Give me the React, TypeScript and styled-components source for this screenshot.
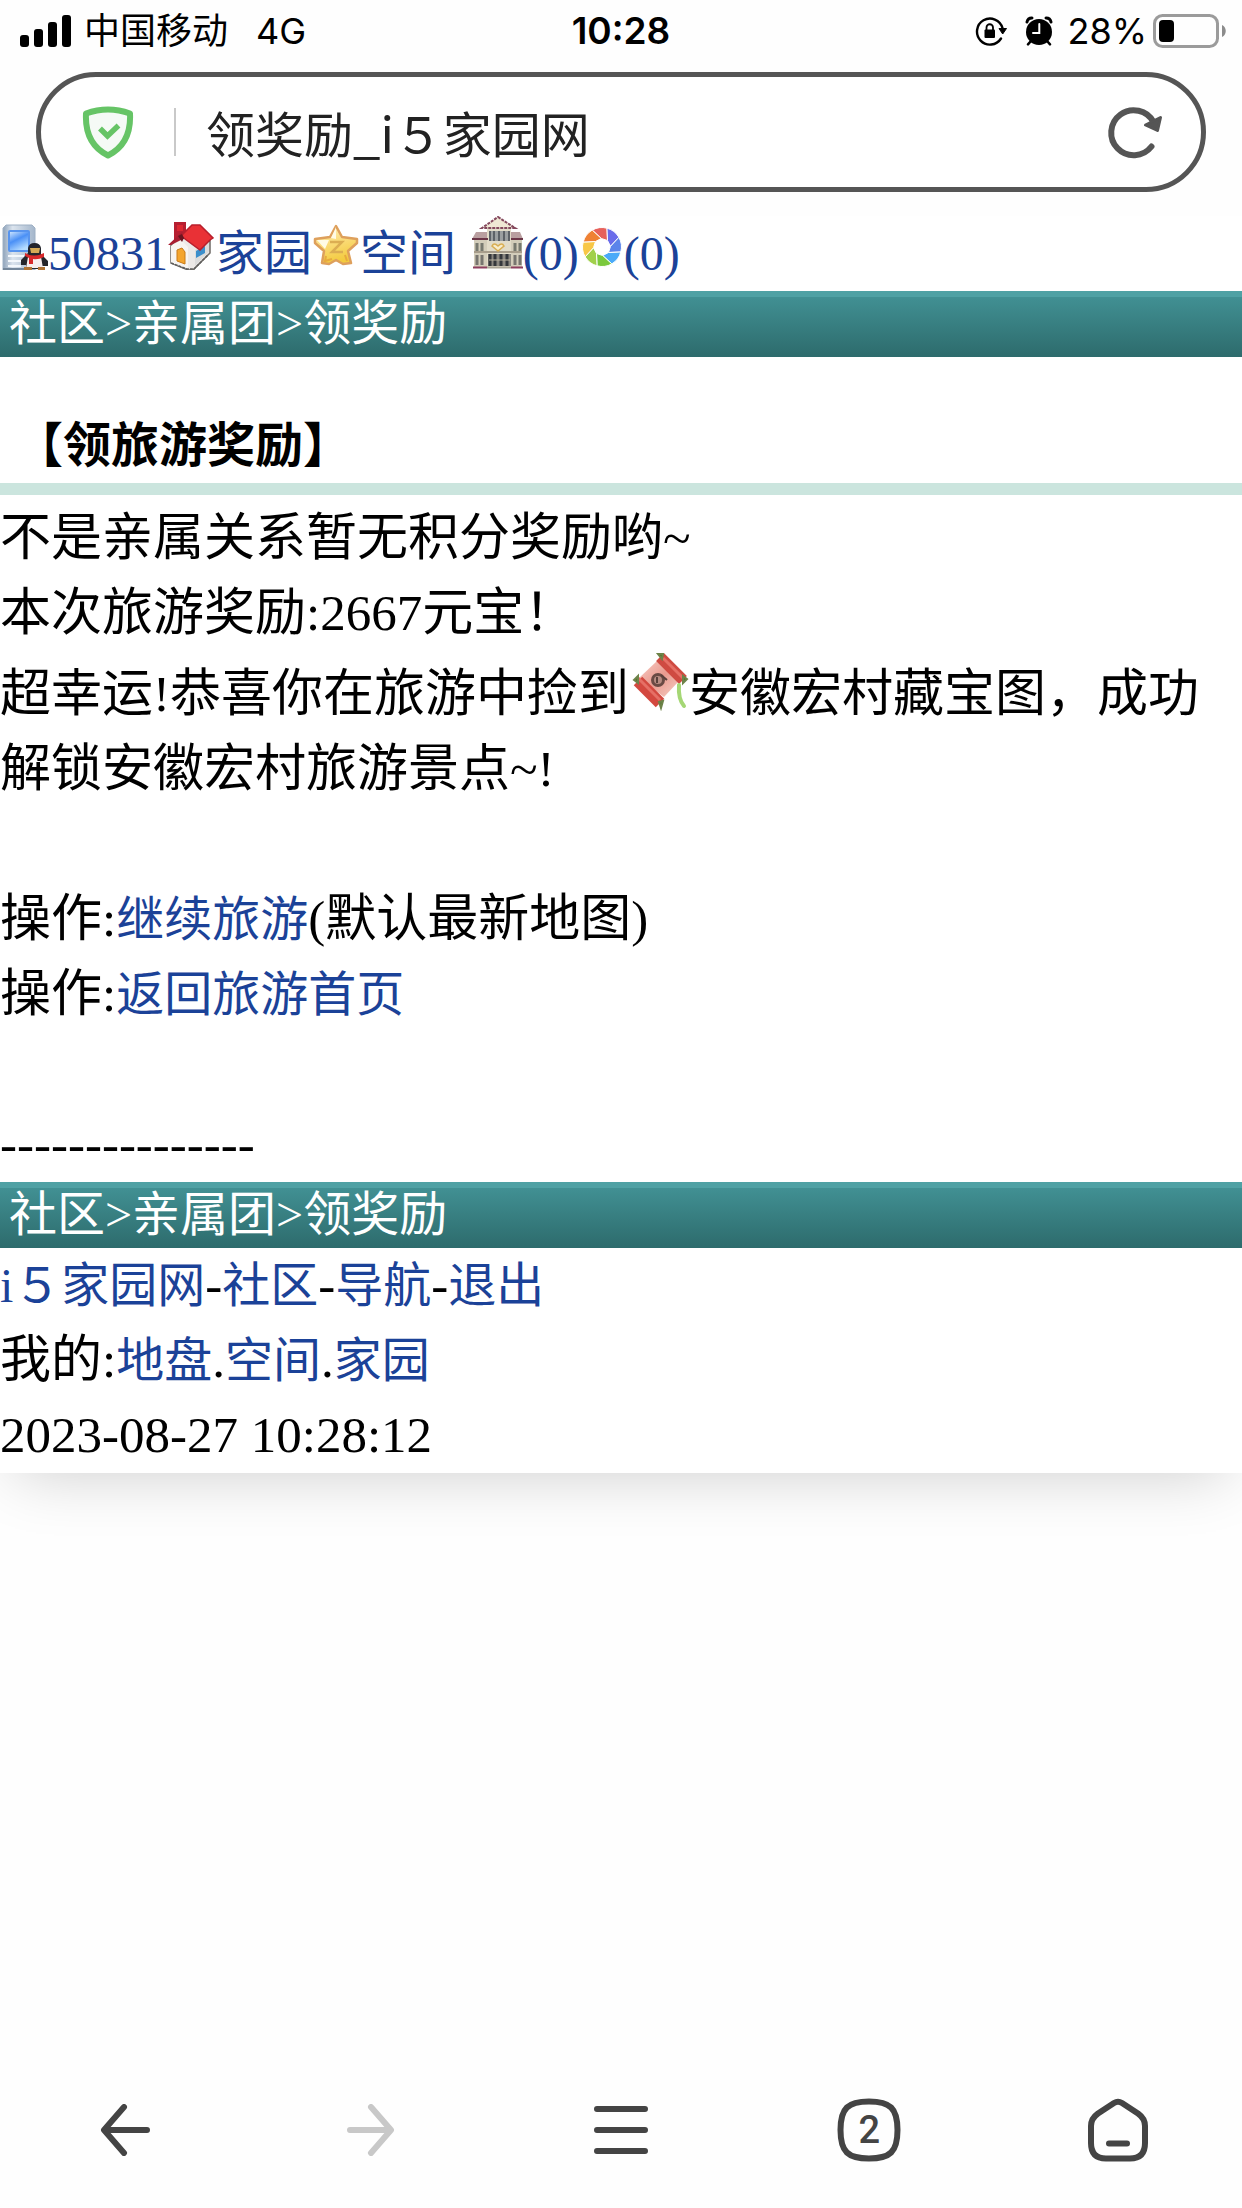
import React from "react";
import styled, { createGlobalStyle } from "styled-components";

const LINK = "#1b4298";
const SANS = `Inter, "Noto Sans CJK SC", sans-serif`;
const SERIF = `"Liberation Serif", "Noto Sans CJK SC", serif`;

const GlobalStyle = createGlobalStyle`
  *, *::before, *::after { box-sizing: border-box; }
  body { margin: 0; background: #fefefe; color: #000; }
  p, h1 { margin: 0; }
  svg { flex: none; }
`;

const Shell = styled.div`
  display: flex;
  flex-direction: column;
  min-height: 100vh;
`;

/* ---------- browser chrome ---------- */

const Chrome = styled.header`
  position: relative;
  z-index: 1;
  padding-bottom: 24px;
  background: #fefefe;
  font-family: ${SANS};
`;

const StatusBar = styled.div`
  display: grid;
  grid-template-columns: 1fr auto 1fr;
  align-items: center;
  height: 60px;
  padding: 0 15px;
  font-size: 36px;
  line-height: 62px;
`;

const StatusSide = styled.div<{ $end?: boolean }>`
  display: flex;
  align-items: center;
  justify-content: ${(p) => (p.$end ? "flex-end" : "flex-start")};
  padding-left: 5px;
`;

const Carrier = styled.span`
  margin: 0 28px 0 13px;
`;

const Clock = styled.time`
  font-size: 37px;
  font-weight: 600;
`;

const Percent = styled.span`
  margin: 0 6px 0 14px;
`;

const AlarmSlot = styled.span`
  display: flex;
  margin-left: 17px;
`;

const AddressBar = styled.form`
  display: flex;
  align-items: center;
  height: 120px;
  margin: 12px 36px 0;
  padding: 0 38px 0 39px;
  border: 5px solid #555;
  border-radius: 60px;
  background: #fff;
`;

const Divider = styled.span`
  width: 2px;
  height: 48px;
  margin: 0 30px 0 38px;
  background: #c9c9c9;
`;

const AddressInput = styled.input`
  flex: 1;
  min-width: 0;
  height: 84px;
  padding: 0 0 2px;
  border: 0;
  background: none;
  color: #222;
  font: 49px/82px "Noto Sans CJK SC", sans-serif;
  outline: none;
`;

const IconButton = styled.button`
  display: grid;
  place-items: center;
  padding: 0;
  border: 0;
  background: none;
  color: #444;
  cursor: pointer;

  &:disabled { color: #c8c8c8; }
`;

const BottomNav = styled.nav`
  display: grid;
  grid-template-columns: repeat(5, 1fr);
  height: 156px;
`;

const TabFrame = styled.span`
  display: grid;
  place-items: center;

  & > * { grid-area: 1 / 1; }
`;

const TabCount = styled.span`
  font: 500 38px/48px Roboto, sans-serif;
`;

/* ---------- web page ---------- */

const Page = styled.main`
  background: #fff;
  box-shadow: 0 15px 60px -15px rgba(0, 0, 0, 0.2);
  font-family: ${SERIF};
  font-size: 51px;
  line-height: 75px;
`;

const Spacer = styled.div`
  flex: 1;
`;

const Link = styled.a`
  color: ${LINK};
  font-size: 48px;
  line-height: 1;
  text-decoration: none;
`;

const Crumbs = styled.nav`
  padding: 0 9px;
  background: linear-gradient(#4fa1a4 0 6px, #419093 6px, #2d6b6c);
  color: #fff;
  font-size: 48px;
  line-height: 66px;

  a { color: inherit; text-decoration: none; }
`;

const Title = styled.h1`
  padding: 51px 15px 0;
  border-bottom: 12px solid #cbe5de;
  font-size: 48px;
  font-weight: 700;
  line-height: 75px;
`;

const Content = styled.section`
  padding-top: 6px;
`;

const Sprite = styled.svg`
  vertical-align: baseline;
`;

/* ---------- status icons ---------- */

const Signal = () => (
  <svg width="51" height="32" viewBox="0 0 51 32" aria-hidden="true">
    <rect x="0" y="20" width="9" height="12" rx="3" />
    <rect x="14" y="14" width="9" height="18" rx="3" />
    <rect x="28" y="7" width="9" height="25" rx="3" />
    <rect x="42" y="0" width="9" height="32" rx="3" />
  </svg>
);

const RotationLock = () => (
  <svg width="33" height="30" viewBox="0 0 33 30" aria-hidden="true">
    <path d="M26 22.500A13 13 0 1 1 27.500 12" fill="none" stroke="#000" strokeWidth="2.4" strokeLinecap="round" />
    <path d="M24 12.500h7.500L27.700 18z" stroke="#000" strokeLinejoin="round" />
    <rect x="9.500" y="13.500" width="10.500" height="8.500" rx="1" />
    <path d="M11.500 14V11.500A3.250 3.250 0 0 1 18 11.500V14" fill="none" stroke="#000" strokeWidth="1.800" />
  </svg>
);

const Alarm = () => (
  <svg width="28" height="30" viewBox="0 0 28 30" aria-hidden="true">
    <circle cx="14" cy="16" r="13" />
    <path d="M2 6a5 5 0 0 1 5-4M26 6a5 5 0 0 0-5-4" fill="none" stroke="#000" strokeWidth="3" strokeLinecap="round" />
    <path d="M5.500 25.500 3 28.300M22.500 25.500 25 28.300" stroke="#000" strokeWidth="2.500" strokeLinecap="round" />
    <path d="M14.300 8v9H8" fill="none" stroke="#fff" strokeWidth="2" strokeLinecap="round" />
  </svg>
);

const Battery = () => (
  <svg width="74" height="34" viewBox="0 0 74 34" aria-hidden="true">
    <rect x="1.500" y="1.500" width="63" height="31" rx="8" fill="none" stroke="#9b9b9b" strokeWidth="3" />
    <rect x="6" y="6" width="15" height="22" rx="4" />
    <path d="M69 11c5 2 5 10 0 12z" fill="#8c8c8c" />
  </svg>
);

/* ---------- toolbar icons ---------- */

const Shield = () => (
  <svg width="56" height="56" viewBox="0 0 56 56" aria-hidden="true">
    <path d="M6 9.500Q28 1.500 50 9.500C51 29 45 43 28 51.500 11 43 5 29 6 9.500z" fill="#f5faf6" stroke="#66c466" strokeWidth="6" strokeLinejoin="round" />
    <path d="M20 24.500 27.500 32 38.500 21.500" fill="none" stroke="#66c466" strokeWidth="5.500" />
  </svg>
);

const Reload = () => (
  <svg width="56" height="54" viewBox="0 0 56 54" aria-hidden="true">
    <path d="M44.500 41.500A22.500 22.500 0 1 1 46.500 17" fill="none" stroke="#555" strokeWidth="6" strokeLinecap="round" />
    <path d="M38.500 20 53.500 12.500 50.500 25.500z" fill="#555" stroke="#555" strokeWidth="3" strokeLinejoin="round" />
  </svg>
);

const Arrow = ({ forward }: { forward?: boolean }) => (
  <svg width="54" height="52" viewBox="0 0 54 52" aria-hidden="true">
    <path
      d={forward ? "M25 3 45 26 25 49M4 26H44" : "M27 3 7 26 27 49M8 26H50"}
      fill="none" stroke="currentColor" strokeWidth="6" strokeLinecap="round" strokeLinejoin="round"
    />
  </svg>
);

const Menu = () => (
  <svg width="54" height="48" viewBox="0 0 54 48" aria-hidden="true">
    <path d="M3 3H51M3 24H51M3 45H51" stroke="currentColor" strokeWidth="6" strokeLinecap="round" />
  </svg>
);

const Squircle = () => (
  <svg width="64" height="64" viewBox="0 0 64 64" aria-hidden="true">
    <path d="M32 3.500C53 3.500 60.500 10 60.500 32S53 60.500 32 60.500 3.500 54 3.500 32 11 3.500 32 3.500z" fill="none" stroke="currentColor" strokeWidth="6" />
  </svg>
);

const Home = () => (
  <svg width="60" height="64" viewBox="0 0 60 64" aria-hidden="true">
    <path d="M26 5Q30 2.500 34 5L50 15.500Q57 20.500 57 28V45Q57 60.500 42 60.500H18Q3 60.500 3 45V28Q3 20.500 10 15.500z" fill="none" stroke="currentColor" strokeWidth="6" strokeLinejoin="round" />
    <path d="M21 45.500H39" stroke="currentColor" strokeWidth="6" strokeLinecap="round" />
  </svg>
);

/* ---------- page sprites ---------- */

const PhoneSprite = () => (
  <Sprite width="48" height="48" viewBox="0 0 48 48" aria-hidden="true">
    <defs>
      <linearGradient id="body" x2="1">
        <stop stopColor="#8fa3ba" />
        <stop offset=".3" stopColor="#dbe4ee" />
        <stop offset="1" stopColor="#a4b6cb" />
      </linearGradient>
      <linearGradient id="screen" y2="1" x2=".5">
        <stop stopColor="#d9ecff" />
        <stop offset=".5" stopColor="#4a90f6" />
        <stop offset="1" stopColor="#b5dcff" />
      </linearGradient>
    </defs>
    <path d="M6 3H32l3 3V48H3V6z" fill="url(#body)" stroke="#9eb0c4" />
    <rect x="9" y="9" width="20" height="20" rx="1" fill="url(#screen)" stroke="#5794ee" strokeWidth="2" />
    <path d="M8 34H24M8 39H22M8 44H21" stroke="#f4f8fc" strokeWidth="2" />
    <path d="M3 47H26" stroke="#74879b" strokeWidth="2" />
    <path d="M28 31V26Q29 21 34.500 21T41 26V32L48 39V44H42V47H26V43H21V38z" fill="#25262c" />
    <path d="M30 26H40L39 31H31z" fill="#d6a955" />
    <path d="M28 35H41L43 46H26z" fill="#f7eeee" />
    <path d="M25 31Q34 36 44 31V35Q38 38 33 37V42H29V36L25 34z" fill="#d9292b" />
    <path d="M24 45H32V48H24zM38 45H45V48H38z" fill="#b17435" />
  </Sprite>
);

const HouseSprite = () => (
  <Sprite width="48" height="48" viewBox="0 0 48 48" aria-hidden="true">
    <path d="M3 23 14 13 33 27 42 18V31L25 48H20L3 41z" fill="#ece9e7" stroke="#6d6a66" strokeWidth="1.500" />
    <path d="M3 24V41L20 47V25L13 18z" fill="#f7f4f0" />
    <path d="M9 28 14 26 17 30V42L9 39z" fill="#f4a52d" stroke="#c97a17" />
    <path d="M27 28 41 19V30L27 44z" fill="#dcdcdc" />
    <path d="M28 29 37 24V31L28 36z" fill="#3c8fcb" />
    <path d="M6 0H18V9L12 16 6 19z" fill="#b61f31" />
    <path d="M9 3H15V9H9z" fill="#dc2831" />
    <path d="M0 23 14 10 20 16 15 17 3 23z" fill="#a91d30" />
    <path d="M24 3H32L45 16 42 18 32 28 13 14z" fill="#e93136" stroke="#b91f2c" strokeWidth="1.500" />
    <path d="M10 14 14 12 16 16 14 20z" fill="#6a1520" />
    <path d="M3 41 19 47H26L40 33" fill="none" stroke="#5e5d5c" strokeWidth="1.500" strokeDasharray="3 1" />
  </Sprite>
);

const StarSprite = () => (
  <Sprite width="48" height="48" viewBox="0 0 48 48" aria-hidden="true">
    <defs>
      <linearGradient id="gold" x2=".3" y2="1">
        <stop stopColor="#fff6c9" />
        <stop offset=".5" stopColor="#fbdc7b" />
        <stop offset="1" stopColor="#f3cb3f" />
      </linearGradient>
    </defs>
    <path d="M24 4 30 15 45 17V21L36 29 39 41 31 42 24 38 17 42 10 41 12 29 3 21V17L18 15z" fill="url(#gold)" stroke="#dea05c" strokeWidth="2.500" strokeLinejoin="round" />
    <path d="M24 5V17L19 16zM5 18 17 18 13 27z" fill="#fffbe6" />
    <path d="M18 20H30L20 30H31" fill="none" stroke="#dcae52" strokeWidth="2.500" />
    <path d="M14 34 13 39 20 37M35 39 33 33" fill="none" stroke="#e7aa3e" strokeWidth="2" />
  </Sprite>
);

const MansionSprite = () => (
  <Sprite width="54" height="54" viewBox="0 0 54 54" aria-hidden="true">
    <path d="M5 23H53V52H5z" fill="#d3cdba" />
    <path d="M18 11H42V52H18z" fill="#e2dcc9" />
    <path d="M29 1 46 12H13z" fill="#efe7d4" stroke="#84485d" strokeWidth="2" strokeDasharray="3 1" />
    <path d="M7 16H18V23H3zM42 16H51L54 23H42z" fill="#b99fa0" />
    <path d="M3 23H19M42 23H54" stroke="#6b3648" strokeWidth="2" />
    <path d="M5 36H53" stroke="#a79d8b" strokeWidth="2" />
    <path d="M21 15H41V25H21z" fill="#9b9fa1" />
    <path d="M21 15V25M25 15V25M30 15V25M35 15V25M40 15V25" stroke="#5d6268" strokeWidth="2" />
    <path d="M8 27V35M13 27V35M46 27V35M51 27V35" stroke="#77796f" strokeWidth="3" />
    <path d="M8 39V49M13 39V49M46 39V49M51 39V49" stroke="#77756f" strokeWidth="3" />
    <path d="M19 38H42V50H19z" fill="#8a8780" />
    <path d="M21 38V50M26 38V50M32 38V50M38 38V50" stroke="#34373b" strokeWidth="3" />
    <path d="M20 44H41" stroke="#b9b19e" />
    <path d="M29 35 23 30Q25 26 29 30 33 26 35 30z" fill="#f8edcc" stroke="#d8ae54" strokeWidth="1.500" />
    <path d="M4 51.500H18M42 51.500H54" stroke="#8d3f5f" strokeWidth="2" />
    <path d="M18 51.500H42" stroke="#aaa495" strokeWidth="2" />
  </Sprite>
);

const BLADES = ["#e7615b", "#6a6cea", "#5b84ea", "#4baaf8", "#7bc93d", "#a1d04b", "#f8c746", "#ef8134"];

const polar = (radius: number, degrees: number) => {
  const a = (degrees * Math.PI) / 180;
  return `${(24 + radius * Math.cos(a)).toFixed(1)} ${(25 + radius * Math.sin(a)).toFixed(1)}`;
};

const ApertureSprite = () => (
  <Sprite width="45" height="45" viewBox="1 3 45 45" aria-hidden="true">
    {BLADES.map((color, i) => {
      const start = -120 + i * 45;
      return (
        <path
          key={color}
          d={`M${polar(19.5, start)}A19.5 19.5 0 0 1 ${polar(19.5, start + 45)}L${polar(8.5, start + 70)}L${polar(8.5, start + 25)}z`}
          fill={color} stroke="#fff" strokeWidth="1"
        />
      );
    })}
  </Sprite>
);

const ScrollSprite = () => (
  <Sprite width="60" height="60" viewBox="0 0 60 60" aria-hidden="true">
    <defs>
      <linearGradient id="paper" x2="1" y2="1">
        <stop stopColor="#f9d0c8" />
        <stop offset=".5" stopColor="#e99a8f" />
        <stop offset="1" stopColor="#f6cfc5" />
      </linearGradient>
    </defs>
    <path d="M28 10 50 30 35 46 10 27z" fill="url(#paper)" />
    <path d="M31 6 54 29" stroke="#cf4a41" strokeWidth="11" />
    <path d="M9 30 31 52" stroke="#d3483f" strokeWidth="12" />
    <path d="M34 7 54 27M9 27 31 49" stroke="#e66f65" strokeWidth="3" />
    <path d="M29 3 34 3 33 8zM54 25 58 28 54 32zM5 29 9 25 9 32zM30 51 34 50 32 57z" fill="#557334" stroke="#6d8349" strokeWidth="2" />
    <circle cx="29" cy="29" r="5.500" fill="#b68b81" stroke="#6a4a44" strokeWidth="3" />
    <path d="M28 26V32M32 24 38 29" stroke="#59403b" strokeWidth="2" />
    <path d="M50 34Q49 48 55 55" fill="none" stroke="#a5d775" strokeWidth="4" strokeLinecap="round" />
  </Sprite>
);

const Trail = () => (
  <Crumbs>
    <a href="#community">社区</a>&gt;<a href="#family">亲属团</a>&gt;领奖励
  </Crumbs>
);

export default function App() {
  return (
    <>
      <GlobalStyle />
      <Shell>
        <Chrome>
          <StatusBar>
            <StatusSide>
              <Signal />
              <Carrier>中国移动</Carrier>
              <span>4G</span>
            </StatusSide>
            <Clock>10:28</Clock>
            <StatusSide $end>
              <RotationLock />
              <AlarmSlot><Alarm /></AlarmSlot>
              <Percent>28%</Percent>
              <Battery />
            </StatusSide>
          </StatusBar>
          <AddressBar onSubmit={(e) => e.preventDefault()}>
            <Shield />
            <Divider />
            <AddressInput aria-label="地址" defaultValue="领奖励_i５家园网" />
            <IconButton type="button" aria-label="刷新"><Reload /></IconButton>
          </AddressBar>
        </Chrome>

        <Page>
          <p>
            <Link href="#mobile"><PhoneSprite />50831</Link>
            <Link href="#home"><HouseSprite />家园</Link>
            <Link href="#space"><StarSprite />空间</Link>{" "}
            <Link href="#mansion"><MansionSprite />(0)</Link>
            <Link href="#album"><ApertureSprite />(0)</Link>
          </p>
          <Trail />
          <Title>【领旅游奖励】</Title>
          <Content>
            <p>不是亲属关系暂无积分奖励哟~</p>
            <p>本次旅游奖励:2667元宝！</p>
            <p>超幸运!恭喜你在旅游中捡到<ScrollSprite />安徽宏村藏宝图，成功解锁安徽宏村旅游景点~!</p>
            <br />
            <p>操作:<Link href="#continue">继续旅游</Link>(默认最新地图)</p>
            <p>操作:<Link href="#travel">返回旅游首页</Link></p>
            <br />
            <p>---------------</p>
          </Content>
          <Trail />
          <footer>
            <p>
              <Link href="#site">i５家园网</Link>-<Link href="#community">社区</Link>-<Link href="#guide">导航</Link>-<Link href="#logout">退出</Link>
            </p>
            <p>
              我的:<Link href="#domain">地盘</Link>.<Link href="#space">空间</Link>.<Link href="#home">家园</Link>
            </p>
            <p><time dateTime="2023-08-27T10:28:12">2023-08-27 10:28:12</time></p>
          </footer>
        </Page>

        <Spacer />

        <BottomNav aria-label="浏览器">
          <IconButton type="button" aria-label="后退"><Arrow /></IconButton>
          <IconButton type="button" aria-label="前进" disabled><Arrow forward /></IconButton>
          <IconButton type="button" aria-label="菜单"><Menu /></IconButton>
          <IconButton type="button" aria-label="标签页">
            <TabFrame><Squircle /><TabCount>2</TabCount></TabFrame>
          </IconButton>
          <IconButton type="button" aria-label="主页"><Home /></IconButton>
        </BottomNav>
      </Shell>
    </>
  );
}
